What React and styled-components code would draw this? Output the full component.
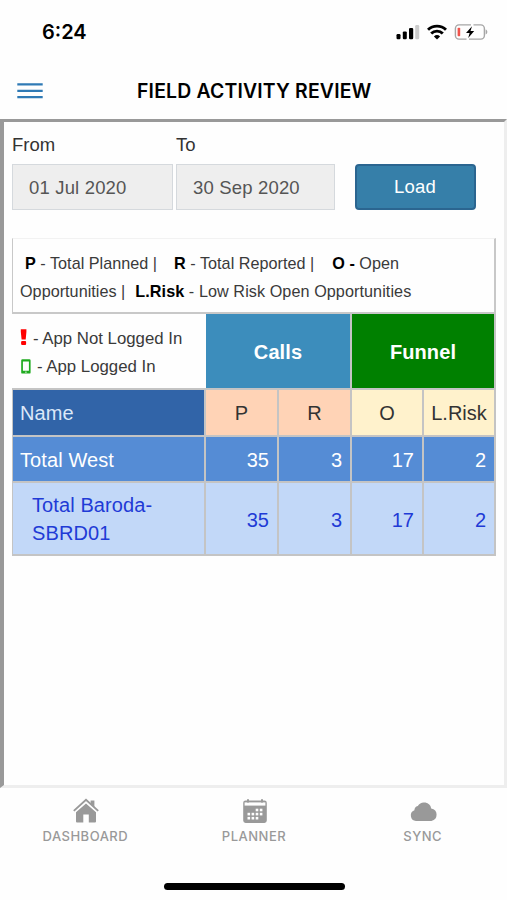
import React from 'react'
import styled, { createGlobalStyle } from 'styled-components'

const rows = [
    { name: "Total West", values: [35, 3, 17, 2], total: true },
    { name: "Total Baroda-SBRD01", values: [35, 3, 17, 2], total: false },
]

const MenuIcon = () => (
    <svg width="26" height="16" viewBox="0 0 26 16">
        <path d="M0.3 1.4h25.4M0.3 7.8h25.4M0.3 14.2h25.4" stroke="#2f7ab5" strokeWidth="2.2" />
    </svg>
)

const SignalIcon = () => (
    <svg width="24" height="16" viewBox="0 0 24 16">
        <rect x="0.5" y="10" width="4" height="5.2" rx="1.2" fill="#000" />
        <rect x="6.8" y="7.4" width="4" height="7.8" rx="1.2" fill="#000" />
        <rect x="13" y="3.9" width="4.2" height="11.3" rx="1.2" fill="#000" />
        <rect x="19.2" y="1" width="4" height="14.2" rx="1.2" fill="#ccc" />
    </svg>
)

const WifiIcon = () => (
    <svg width="20" height="16" viewBox="0 0 20 16">
        <g fill="none" stroke="#000" strokeWidth="2.9">
            <path d="M1 5.8a12.8 12.8 0 0 1 18 0" />
            <path d="M4.2 9.5a8.2 8.2 0 0 1 11.6 0" />
        </g>
        <path d="M6.9 12.4a4.6 4.6 0 0 1 6.2 0L10 15.6z" fill="#000" />
    </svg>
)

const BatteryIcon = () => (
    <svg width="34" height="18" viewBox="0 0 34 18">
        <path d="M17 1.9H5a3.6 3.6 0 0 0-3.6 3.6v7A3.6 3.6 0 0 0 5 16.1h7.5M19.5 1.9h7.3a3.6 3.6 0 0 1 3.6 3.6v7a3.6 3.6 0 0 1-3.6 3.6H15" fill="none" stroke="#a6a6a6" strokeWidth="1.4" />
        <path d="M31.6 6.6c2.3.6 2.3 4.2 0 4.8z" fill="#a6a6a6" />
        <rect x="3.6" y="4.7" width="2.6" height="8.6" rx="0.8" fill="#f0544c" />
        <path d="M18 3.2l-6 6.9h3.6L14.2 15l6-7h-3.7z" fill="#000" />
    </svg>
)

const HomeIcon = () => (
    <svg width="28" height="26" viewBox="0 0 28 26">
        <path d="M14 5.4L24 14.2V23.4a1 1 0 0 1-1 1H16.8V16.4H11.3V24.4H5a1 1 0 0 1-1-1V14.2z" fill="#999" />
        <path d="M1.8 12.9L14 1.9l12.2 11" fill="none" stroke="#999" strokeWidth="1.9" />
        <path d="M18.6 2.4h3.8v7.3l-3.8-3.4z" fill="#999" />
    </svg>
)

const CalendarIcon = () => (
    <svg width="26" height="26" viewBox="0 0 26 26">
        <path d="M3.6 2.4h18.8a2.4 2.4 0 0 1 2.4 2.4v17.8a2.4 2.4 0 0 1-2.4 2.4H3.6a2.4 2.4 0 0 1-2.4-2.4V4.8a2.4 2.4 0 0 1 2.4-2.4z" fill="#999" />
        <path d="M2.6 4.4h20.8v3.2H2.6z" fill="#fefefe" />
        <path d="M5 1.2h2v3.4H5zM19 1.2h2v3.4h-2z" fill="#999" />
        <g fill="#fefefe">
            {[13.7, 17.8].map((x) => <rect key={x} x={x} y="10.7" width="2.6" height="2.6" />)}
            {[5.5, 9.6, 13.7, 17.8].map((x) => <rect key={x} x={x} y="14.8" width="2.6" height="2.6" />)}
            {[5.5, 9.6, 13.7].map((x) => <rect key={x} x={x} y="18.9" width="2.6" height="2.6" />)}
        </g>
    </svg>
)

const CloudIcon = () => (
    <svg width="28" height="26" viewBox="0 0 28 26">
        <path d="M6 23A5.6 5.6 0 0 1 4.4 12.2 4.4 4.4 0 0 1 7.8 8 7.3 7.3 0 0 1 21.2 10.4 6.4 6.4 0 0 1 21.4 23z" fill="#999" />
    </svg>
)

const AlertIcon = () => (
    <svg width="7" height="20" viewBox="0 0 7 20">
        <path d="M0.8 0.2h5.6v2.6L5.7 10.4H1.6L.8 2.8z" fill="#f00" />
        <rect x="1.1" y="12" width="5" height="4" rx="1" fill="#f00" />
    </svg>
)

const PhoneIcon = () => (
    <svg width="11" height="16" viewBox="0 0 11 16">
        <path fillRule="evenodd" d="M2.4 .2h7a1.2 1.2 0 0 1 1.2 1.2v12A1.2 1.2 0 0 1 9.4 14.6h-7a1.2 1.2 0 0 1-1.2-1.2v-12A1.2 1.2 0 0 1 2.4 .2zM2.9 2.6v9.2h6V2.6zM5 12.7v.9h1.8v-.9z" fill="#1faa1f" />
    </svg>
)

const App = () => {
    return (
        <>
            <GlobalStyle />
            <Screen>
                <StatusBar>
                    <Clock>6:24</Clock>
                    <StatusIcons>
                        <SignalIcon />
                        <WifiIcon />
                        <BatteryIcon />
                    </StatusIcons>
                </StatusBar>
                <Header>
                    <MenuButton aria-label="Menu"><MenuIcon /></MenuButton>
                    <Title>FIELD ACTIVITY REVIEW</Title>
                </Header>
                <Frame>
                    <Filters>
                        <Field $width="161px">
                            <label>From</label>
                            <DateBox>01 Jul 2020</DateBox>
                        </Field>
                        <Field $width="159px">
                            <label>To</label>
                            <DateBox>30 Sep 2020</DateBox>
                        </Field>
                        <LoadButton>Load</LoadButton>
                    </Filters>
                    <Legend>
                        <LegendLine $indent="5px">
                            <Term $space="17px"><b>P</b> - Total Planned |</Term>
                            <Term $space="18px"><b>R</b> - Total Reported |</Term>
                            <Term><b>O -</b> Open</Term>
                        </LegendLine>
                        <LegendLine>
                            <Term $space="10px">Opportunities |</Term>
                            <Term $tracking="0.07px"><b>L.Risk</b> - Low Risk Open Opportunities</Term>
                        </LegendLine>
                    </Legend>
                    <Table>
                        <LoginKey>
                            <p><AlertIcon /> - App Not Logged In</p>
                            <p><PhoneIcon /> - App Logged In</p>
                        </LoginKey>
                        <Group $bg="#3c8dbc">Calls</Group>
                        <Group $bg="#008000">Funnel</Group>

                        <NameCell $bg="#3164a8" $color="#dce8f8">Name</NameCell>
                        <HeadCell $bg="#ffd3b6">P</HeadCell>
                        <HeadCell $bg="#ffd3b6">R</HeadCell>
                        <HeadCell $bg="#fff2cc">O</HeadCell>
                        <HeadCell $bg="#fff2cc">L.Risk</HeadCell>

                        {rows.map((row) => {
                            const bg = row.total ? "#558cd5" : "#c2d8f8"
                            const color = row.total ? "#fff" : "#1f3bd6"
                            return (
                                <React.Fragment key={row.name}>
                                    <NameCell $bg={bg} $color={color} $nested={!row.total}>{row.name}</NameCell>
                                    {row.values.map((value, i) => (
                                        <ValueCell key={i} $bg={bg} $color={color}>{value}</ValueCell>
                                    ))}
                                </React.Fragment>
                            )
                        })}
                    </Table>
                </Frame>
                <TabBar>
                    <Tab><HomeIcon />DASHBOARD</Tab>
                    <Tab><CalendarIcon />PLANNER</Tab>
                    <Tab><CloudIcon />SYNC</Tab>
                </TabBar>
                <HomeIndicator />
            </Screen>
        </>
    )
}

export default App

const GlobalStyle = createGlobalStyle`
* {
    box-sizing: border-box;
}
body {
    margin: 0;
    background-color: #fefefe;
    overflow: hidden;
}
svg {
    display: block;
    flex: none;
}
`

const Screen = styled.div`
width: 507px;
height: 900px;
display: flex;
flex-direction: column;
background-color: #fefefe;
font-family: "Liberation Sans", Arial, sans-serif;
`

const StatusBar = styled.div`
height: 62px;
padding: 0 19px 0 42px;
display: flex;
align-items: center;
justify-content: space-between;
`

const Clock = styled.div`
font-family: Inter, sans-serif;
font-size: 20px;
font-weight: 600;
padding-top: 2px;
`

const StatusIcons = styled.div`
display: flex;
align-items: center;
gap: 7px;
padding-top: 1px;
`

const Header = styled.div`
height: 57px;
display: flex;
align-items: center;
padding-left: 17px;
`

const MenuButton = styled.button`
width: 26px;
padding: 0;
border: none;
background: none;
`

const Title = styled.h1`
margin: 0 0 0 94px;
font-family: Inter, sans-serif;
font-size: 19.4px;
font-weight: 600;
white-space: nowrap;
letter-spacing: 0.18px;
`

const Frame = styled.div`
height: 669px;
padding: 13px 8px 0;
border-style: solid;
border-width: 3px 3px 3px 4px;
border-color: #999 #eee #eee #999;
`

const Filters = styled.div`
display: flex;
align-items: flex-end;
gap: 3px;
height: 75px;
`

const Field = styled.div`
width: ${props => props.$width};
label{
    display: block;
    height: 29px;
    line-height: 19px;
    font-size: 18.5px;
    color: #333;
}
`

const DateBox = styled.div`
height: 46px;
padding-left: 16px;
border: 1px solid #d5d9dd;
background-color: #eee;
color: #555;
font-size: 18.5px;
letter-spacing: 0.17px;
line-height: 45px;
`

const LoadButton = styled.button`
width: 121px;
height: 46px;
margin-left: 17px;
padding: 0 1px 0 0;
border: 2px solid #2b6590;
border-radius: 4px;
background-color: #367fa9;
color: #fff;
font-family: inherit;
font-size: 18.5px;
letter-spacing: 0.2px;
`

const Legend = styled.div`
height: 76px;
width: 484px;
margin-top: 28px;
padding: 10px 7px 0;
border: 2px solid #c8c8c8;
border-top: 1px solid #f2f2f2;
border-left-width: 1px;
`

const LegendLine = styled.div`
display: flex;
height: 28px;
line-height: 28px;
padding-left: ${props => props.$indent || 0};
`

const Term = styled.span`
margin-right: ${props => props.$space || 0};
white-space: nowrap;
font-size: 16.2px;
letter-spacing: ${props => props.$tracking || "0.02px"};
color: #3a3a3a;
b{
    color: #000;
}
`

const Table = styled.div`
display: grid;
width: 484px;
grid-template-columns: 194px 73px 73px 72px 72px;
grid-template-rows: 76px 47px 46px 73px;
`

const LoginKey = styled.div`
padding: 11px 0 0 8px;
border-bottom: 2px solid #c4c4c4;
p{
    margin: 0;
    display: flex;
    align-items: center;
    gap: 6px;
    height: 28px;
    font-size: 16.8px;
    color: #3a3a3a;
    white-space: nowrap;
}
`

const Group = styled.div`
grid-column: span 2;
display: flex;
align-items: center;
justify-content: center;
padding-top: 2px;
border-right: 2px solid #c4c4c4;
border-bottom: 2px solid #c4c4c4;
background-color: ${props => props.$bg};
color: #fff;
font-size: 20px;
font-weight: bold;
letter-spacing: 0.1px;
`

const Cell = styled.div`
display: flex;
align-items: center;
border-right: 2px solid #c4c4c4;
border-bottom: 2px solid #c4c4c4;
background-color: ${props => props.$bg};
color: ${props => props.$color};
font-size: 20px;
line-height: 28px;
`

const HeadCell = styled(Cell)`
justify-content: center;
color: #333;
`

const NameCell = styled(Cell)`
padding: ${props => props.$nested ? "0 40px 0 19px" : "1px 7px 0 7px"};
border-left: 1px solid #c4c4c4;
letter-spacing: 0.1px;
`

const ValueCell = styled(Cell)`
justify-content: flex-end;
padding: 2px 8px 0 0;
`

const TabBar = styled.div`
height: 95px;
padding: 10px 0 0 1px;
display: grid;
grid-template-columns: repeat(3, 1fr);
`

const Tab = styled.div`
display: flex;
flex-direction: column;
align-items: center;
font-family: Inter, sans-serif;
font-size: 13px;
font-weight: 500;
letter-spacing: 0.5px;
line-height: 24px;
color: #999;
svg{
    margin-left: 2px;
}
`

const HomeIndicator = styled.div`
width: 181px;
height: 7px;
margin-left: 163.5px;
border-radius: 4px;
background-color: #000;
`
